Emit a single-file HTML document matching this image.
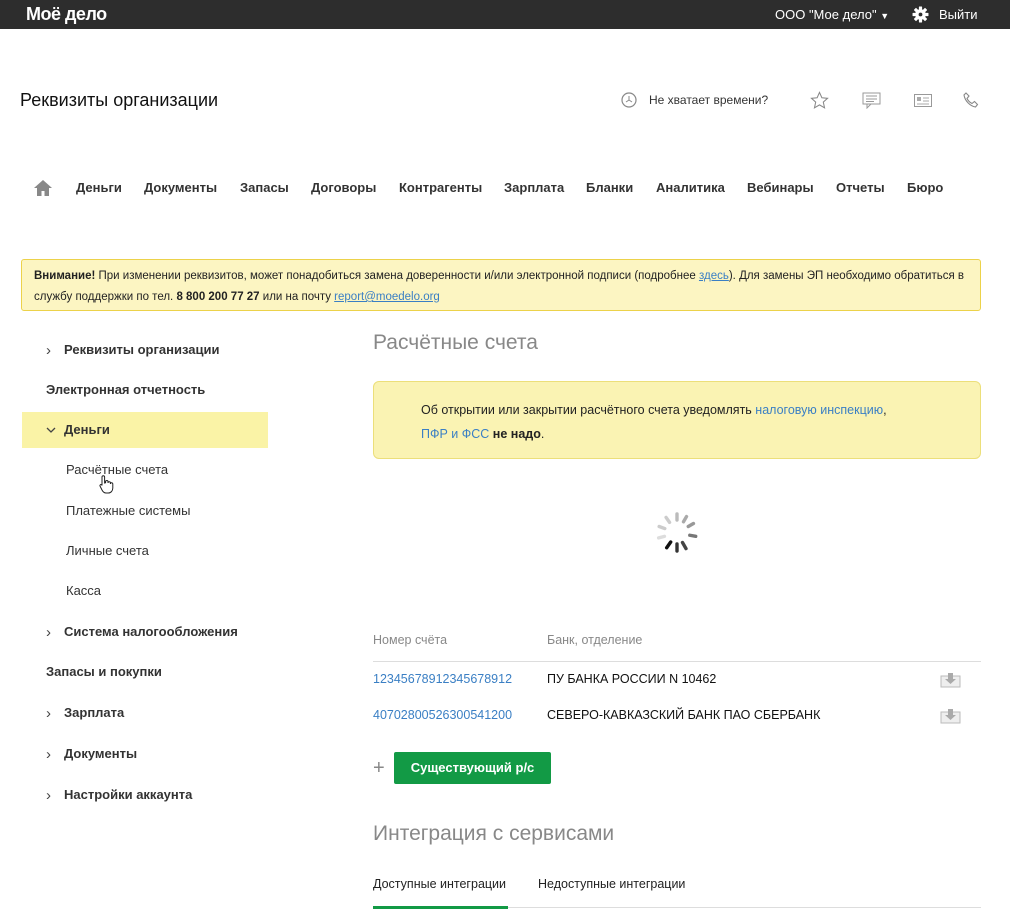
<!DOCTYPE html><html><head><meta charset="utf-8"><style>
*{margin:0;padding:0;box-sizing:border-box}
body{width:1010px;height:920px;background:#fff;font-family:"Liberation Sans",Arial,sans-serif;color:#222;position:relative;overflow:hidden}
.a{position:absolute;white-space:nowrap}
.top{position:absolute;left:0;top:0;width:1010px;height:29px;background:#2d2d2d}
.nav{font-size:13px;font-weight:bold;color:#333;top:180px}
.sb{font-size:13px;color:#333;left:46px}
.sb.b{font-weight:bold}
.sb.s{left:66px}
.ch{position:absolute;left:-18px;top:0px;font-weight:normal;font-size:15px;color:#444}
a{color:#3a7fc4;text-decoration:none}
</style></head><body>
<div class="top"></div>
<div class="a" style="left:26px;top:4px;color:#fff;font-size:18px;font-weight:bold;letter-spacing:-0.5px">Моё дело</div>
<div class="a" style="left:775px;top:7px;color:#fff;font-size:13px">ООО "Мое дело" <span style="font-size:9px">▼</span></div>
<svg class="a" style="left:912px;top:6px" width="17" height="17" viewBox="0 0 16 16"><g fill="#fff"><rect x="6.5" y="0.5" width="3" height="15" rx=".5"/><rect x="6.5" y="0.5" width="3" height="15" rx=".5" transform="rotate(45 8 8)"/><rect x="6.5" y="0.5" width="3" height="15" rx=".5" transform="rotate(90 8 8)"/><rect x="6.5" y="0.5" width="3" height="15" rx=".5" transform="rotate(135 8 8)"/><circle cx="8" cy="8" r="5"/></g><circle cx="8" cy="8" r="1.8" fill="#2d2d2d"/></svg>
<div class="a" style="left:939px;top:7px;color:#fff;font-size:13px">Выйти</div>

<div class="a" style="left:20px;top:90px;font-size:18px;color:#111">Реквизиты организации</div>
<svg class="a" style="left:621px;top:92px" width="16" height="16"><circle cx="8" cy="8" r="7" fill="none" stroke="#888" stroke-width="1.2"/><path d="M8 4v4l-3 2M8 8l3 2" stroke="#888" fill="none"/></svg>
<div class="a" style="left:649px;top:93px;font-size:12px;color:#333">Не хватает времени?</div>
<svg class="a" style="left:810px;top:91px" width="19" height="19" viewBox="0 0 20 20"><path d="M10 1.5l2.5 5.6 6 .6-4.5 4 1.3 6L10 14.6 4.7 17.7l1.3-6-4.5-4 6-.6z" fill="none" stroke="#888" stroke-width="1.1"/></svg>
<svg class="a" style="left:862px;top:92px" width="19" height="17"><rect x="1" y="1" width="17" height="11" fill="none" stroke="#999"/><path d="M4 4h11M4 7h11M4 9.5h8M5 12v4l4-4" stroke="#999" fill="none"/></svg>
<svg class="a" style="left:914px;top:94px" width="18" height="13"><rect x=".5" y=".5" width="17" height="12" fill="none" stroke="#999"/><rect x="3" y="3" width="4" height="4" fill="#aaa"/><path d="M9 4h6M9 7h6M3 10h12" stroke="#aaa"/></svg>
<svg class="a" style="left:962px;top:91px" width="18" height="18"><path d="M4 2l3 3-2 2.5c1 2 3 4 5 5l2.5-2 3 3-2 2.5C8 15 3 10 2 4z" fill="none" stroke="#888" stroke-width="1.1"/></svg>

<svg class="a" style="left:33px;top:179px" width="20" height="18"><path d="M10 1L1 9h3v8h4.5v-5h3v5H16V9h3z" fill="#888"/></svg>
<div class="a nav" style="left:76px">Деньги</div>
<div class="a nav" style="left:144px">Документы</div>
<div class="a nav" style="left:240px">Запасы</div>
<div class="a nav" style="left:311px">Договоры</div>
<div class="a nav" style="left:399px">Контрагенты</div>
<div class="a nav" style="left:504px">Зарплата</div>
<div class="a nav" style="left:586px">Бланки</div>
<div class="a nav" style="left:656px">Аналитика</div>
<div class="a nav" style="left:747px">Вебинары</div>
<div class="a nav" style="left:836px">Отчеты</div>
<div class="a nav" style="left:907px">Бюро</div>

<div class="a" style="left:21px;top:259px;width:960px;height:52px;background:#fcf5c2;border:1px solid #ecd24a;border-radius:3px"></div>
<div class="a" style="left:34px;top:266px;font-size:11.5px;line-height:21px;color:#222;white-space:normal;width:940px"><b>Внимание!</b> При изменении реквизитов, может понадобиться замена доверенности и/или электронной подписи (подробнее <a style="text-decoration:underline">здесь</a>). Для замены ЭП необходимо обратиться в службу поддержки по тел. <b>8 800 200 77 27</b> или на почту <a style="text-decoration:underline">report@moedelo.org</a></div>

<div class="a" style="left:22px;top:412px;width:246px;height:36px;background:#faf3a6"></div>
<div class="a sb b" style="left:64px;top:342px"><span class="ch">›</span>Реквизиты организации</div>
<div class="a sb b" style="top:382px">Электронная отчетность</div>
<div class="a sb b" style="left:64px;top:422px"><svg class="a" style="left:-18px;top:4px" width="10" height="8"><path d="M1 2l4 4 4-4" fill="none" stroke="#444" stroke-width="1.3"/></svg>Деньги</div>
<div class="a sb s" style="top:462px">Расчётные счета</div>
<div class="a sb s" style="top:503px">Платежные системы</div>
<div class="a sb s" style="top:543px">Личные счета</div>
<div class="a sb s" style="top:583px">Касса</div>
<div class="a sb b" style="left:64px;top:624px"><span class="ch">›</span>Система налогообложения</div>
<div class="a sb b" style="top:664px">Запасы и покупки</div>
<div class="a sb b" style="left:64px;top:705px"><span class="ch">›</span>Зарплата</div>
<div class="a sb b" style="left:64px;top:746px"><span class="ch">›</span>Документы</div>
<div class="a sb b" style="left:64px;top:787px"><span class="ch">›</span>Настройки аккаунта</div>
<svg class="a" style="left:97px;top:474px" width="18" height="20"><path d="M5 11V3a1.3 1.3 0 012.6 0v6l1-.3v-1a1.2 1.2 0 012.4 0v1.3a1.2 1.2 0 012.4 0v1a1.2 1.2 0 012.4 0V14c0 3-2 5-4.5 5H9c-2 0-3-1-4-3l-2-4c-.5-1 .8-2 1.6-1z" fill="#fff" stroke="#222"/></svg>

<div class="a" style="left:373px;top:331px;font-size:21px;color:#888">Расчётные счета</div>
<div class="a" style="left:373px;top:381px;width:608px;height:78px;background:#faf3b3;border:1px solid #ecdf7a;border-radius:6px"></div>
<div class="a" style="left:421px;top:398px;font-size:12.5px;line-height:24px;color:#222">Об открытии или закрытии расчётного счета уведомлять <a>налоговую инспекцию</a>,<br><a>ПФР и ФСС</a> <b>не надо</b>.</div>

<svg class="a" style="left:654px;top:510px" width="46" height="46" viewBox="-23 -23 46 46">
<g stroke-width="3.4" stroke-linecap="round">
<line x1="0" y1="-13" x2="0" y2="-19" stroke="#bbb" transform="rotate(0)"/>
<line x1="0" y1="-13" x2="0" y2="-19" stroke="#aaa" transform="rotate(30)"/>
<line x1="0" y1="-13" x2="0" y2="-19" stroke="#999" transform="rotate(60)"/>
<line x1="0" y1="-13" x2="0" y2="-19" stroke="#777" transform="rotate(100)"/>
<line x1="0" y1="-11" x2="0" y2="-18" stroke="#444" transform="rotate(150)"/>
<line x1="0" y1="-11" x2="0" y2="-18" stroke="#333" transform="rotate(180)"/>
<line x1="0" y1="-11" x2="0" y2="-18" stroke="#111" transform="rotate(215)"/>
<line x1="0" y1="-13" x2="0" y2="-19" stroke="#ddd" transform="rotate(255)"/>
<line x1="0" y1="-13" x2="0" y2="-19" stroke="#ccc" transform="rotate(290)"/>
<line x1="0" y1="-13" x2="0" y2="-19" stroke="#ccc" transform="rotate(325)"/>
</g></svg>

<div class="a" style="left:373px;top:633px;font-size:12.5px;color:#888">Номер счёта</div>
<div class="a" style="left:547px;top:633px;font-size:12.5px;color:#888">Банк, отделение</div>
<div class="a" style="left:373px;top:661px;width:608px;height:1px;background:#ddd"></div>
<div class="a" style="left:373px;top:672px;font-size:12.5px"><a>12345678912345678912</a></div>
<div class="a" style="left:547px;top:672px;font-size:12.5px;color:#111">ПУ БАНКА РОССИИ N 10462</div>
<div class="a" style="left:373px;top:708px;font-size:12.5px"><a>40702800526300541200</a></div>
<div class="a" style="left:547px;top:708px;font-size:12.5px;color:#111">СЕВЕРО-КАВКАЗСКИЙ БАНК ПАО СБЕРБАНК</div>
<svg class="a" style="left:940px;top:672px" width="22" height="16"><rect x="1" y="4" width="19" height="11" fill="#eee" stroke="#bbb"/><path d="M8 1h5v6h3l-5.5 5L5 7h3z" fill="#aaa"/></svg>
<svg class="a" style="left:940px;top:708px" width="22" height="16"><rect x="1" y="4" width="19" height="11" fill="#eee" stroke="#bbb"/><path d="M8 1h5v6h3l-5.5 5L5 7h3z" fill="#aaa"/></svg>

<div class="a" style="left:373px;top:755px;font-size:20px;color:#888;line-height:26px">+</div>
<div class="a" style="left:394px;top:752px;width:157px;height:32px;background:#129a45;border-radius:2px;color:#fff;font-weight:bold;font-size:13px;text-align:center;line-height:32px">Существующий р/с</div>

<div class="a" style="left:373px;top:822px;font-size:21px;color:#888">Интеграция с сервисами</div>
<div class="a" style="left:373px;top:877px;font-size:12.5px;color:#222">Доступные интеграции</div>
<div class="a" style="left:538px;top:877px;font-size:12.5px;color:#222">Недоступные интеграции</div>
<div class="a" style="left:373px;top:907px;width:608px;height:1px;background:#ddd"></div>
<div class="a" style="left:373px;top:906px;width:135px;height:3px;background:#129a45"></div>
</body></html>
